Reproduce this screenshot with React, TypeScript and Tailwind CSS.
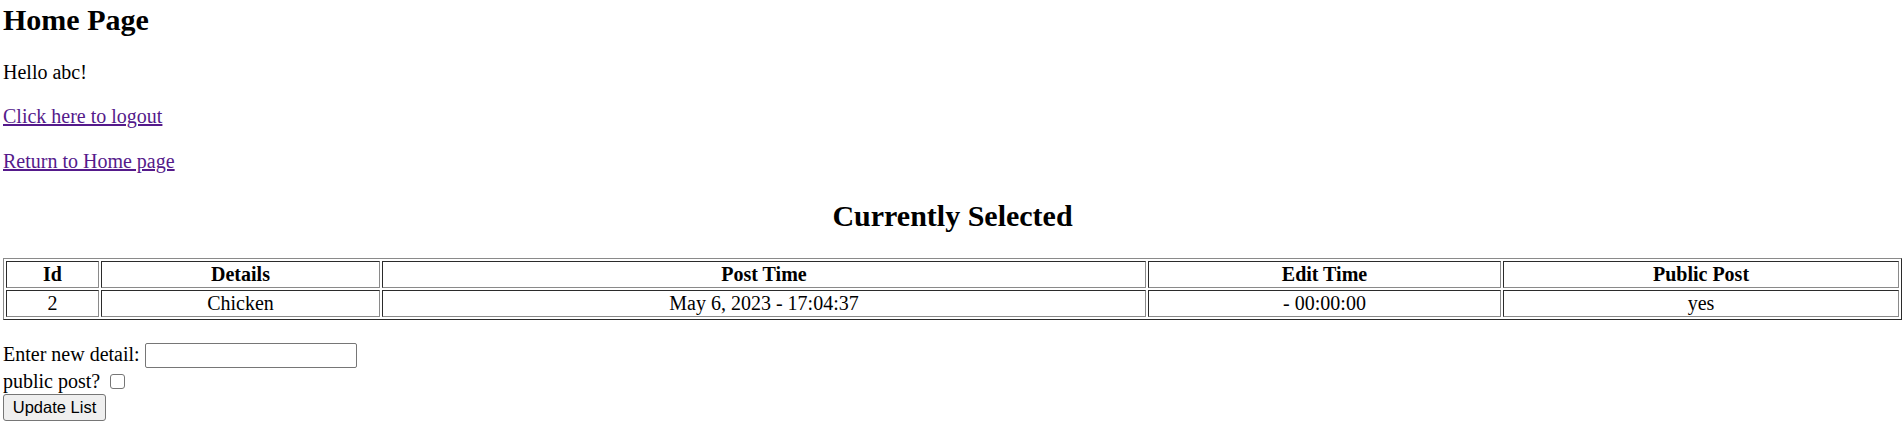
import { useState } from 'react';

type Post = {
  id: number;
  details: string;
  postTime: string;
  editTime: string;
  isPublic: boolean;
};

const selected: Post = {
  id: 2,
  details: 'Chicken',
  postTime: 'May 6, 2023 - 17:04:37',
  editTime: '- 00:00:00',
  isPublic: true,
};

// cell borders mimic the old border="1" inset look
const cell =
  'border border-t-[#2b2b2b] border-l-[#2b2b2b] border-r-[#8a8a8a] border-b-[#8a8a8a] py-px px-px leading-[23px] text-center align-middle';

export default function App() {
  const [detail, setDetail] = useState('');
  const [isPublic, setIsPublic] = useState(false);

  return (
    <div
      className="min-h-screen bg-white text-black pt-[3px] pl-[3px] pr-[2px] text-[20px]"
      style={{ fontFamily: '"Liberation Serif", "Times New Roman", serif' }}
    >
      <h2 className="text-[30px] font-bold leading-[34px]">Home Page</h2>

      <p className="mt-[24px] leading-[23px]">Hello abc!</p>

      <div className="mt-[21px] leading-[23px]">
        <a href="#" className="text-[#551a8b] underline">
          Click here to logout
        </a>
      </div>
      <div className="mt-[22px] leading-[23px]">
        <a href="#" className="text-[#551a8b] underline">
          Return to Home page
        </a>
      </div>

      <h2 className="mt-[26px] text-center text-[30px] font-bold leading-[34px]">Currently Selected</h2>

      <table className="mt-[25px] w-full table-fixed border-separate border-spacing-[2px] border border-t-[#8a8a8a] border-l-[#8a8a8a] border-r-[#2b2b2b] border-b-[#2b2b2b]">
        <colgroup>
          <col className="w-[93px]" />
          <col className="w-[279px]" />
          <col className="w-[764px]" />
          <col className="w-[353px]" />
          <col className="w-[396px]" />
        </colgroup>
        <thead>
          <tr>
            <th className={`${cell} font-bold`}>Id</th>
            <th className={`${cell} font-bold`}>Details</th>
            <th className={`${cell} font-bold`}>Post Time</th>
            <th className={`${cell} font-bold`}>Edit Time</th>
            <th className={`${cell} font-bold`}>Public Post</th>
          </tr>
        </thead>
        <tbody>
          <tr>
            <td className={cell}>{selected.id}</td>
            <td className={cell}>{selected.details}</td>
            <td className={cell}>{selected.postTime}</td>
            <td className={cell}>{selected.editTime}</td>
            <td className={cell}>{selected.isPublic ? 'yes' : 'no'}</td>
          </tr>
        </tbody>
      </table>

      <form className="mt-[23px]" onSubmit={(e) => e.preventDefault()}>
        <div className="h-[27px] leading-[23px]">
          Enter new detail:{' '}
          <input
            type="text"
            value={detail}
            onChange={(e) => setDetail(e.target.value)}
            className="align-top w-[212px] h-[25px] border border-[#767676] rounded-[2px] bg-white px-[2px] text-[16.5px] outline-none"
            style={{ fontFamily: '"Liberation Sans", Arial, sans-serif' }}
          />
        </div>
        <div className="h-[23px] leading-[23px]">
          public post?{' '}
          <input
            type="checkbox"
            checked={isPublic}
            onChange={(e) => setIsPublic(e.target.checked)}
            className="appearance-none align-top mt-[4px] ml-[5px] w-[15px] h-[15px] border border-[#767676] rounded-[3px] bg-white"
          />
        </div>
        <button
          type="submit"
          className="mt-px block h-[27px] w-[103px] border border-[#767676] rounded-[3px] bg-[#efefef] text-[16.5px] leading-[25px] text-black"
          style={{ fontFamily: '"Liberation Sans", Arial, sans-serif' }}
        >
          Update List
        </button>
      </form>
    </div>
  );
}
